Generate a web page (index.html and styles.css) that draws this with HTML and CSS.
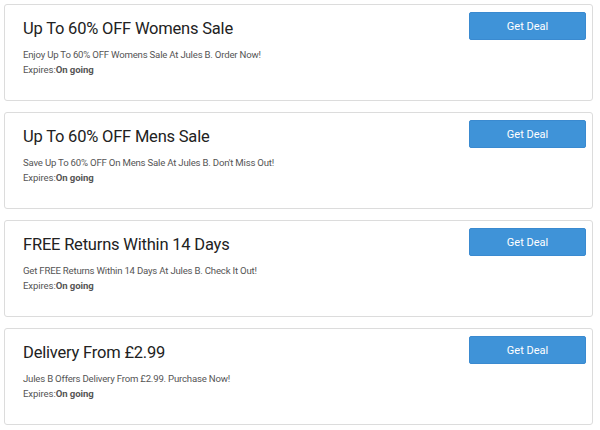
FILE: index.html
```html
<!DOCTYPE html>
<html>
<head>
<meta charset="utf-8">
<link rel="stylesheet" href="styles.css">
</head>
<body>
<div class="list">
  <div class="card">
    <div class="info">
      <h2 class="title">Up To 60% OFF Womens Sale</h2>
      <p class="desc">Enjoy Up To 60% OFF Womens Sale At Jules B. Order Now!</p>
      <p class="expires">Expires:<b>On going</b></p>
    </div>
    <a class="btn">Get Deal</a>
  </div>
  <div class="card">
    <div class="info">
      <h2 class="title">Up To 60% OFF Mens Sale</h2>
      <p class="desc">Save Up To 60% OFF On Mens Sale At Jules B. Don't Miss Out!</p>
      <p class="expires">Expires:<b>On going</b></p>
    </div>
    <a class="btn">Get Deal</a>
  </div>
  <div class="card">
    <div class="info">
      <h2 class="title">FREE Returns Within 14 Days</h2>
      <p class="desc">Get FREE Returns Within 14 Days At Jules B. Check It Out!</p>
      <p class="expires">Expires:<b>On going</b></p>
    </div>
    <a class="btn">Get Deal</a>
  </div>
  <div class="card">
    <div class="info">
      <h2 class="title">Delivery From £2.99</h2>
      <p class="desc">Jules B Offers Delivery From £2.99. Purchase Now!</p>
      <p class="expires">Expires:<b>On going</b></p>
    </div>
    <a class="btn">Get Deal</a>
  </div>
</div>
</body>
</html>
```

FILE: styles.css
```css
html, body {
  margin: 0;
  padding: 0;
  background: #ffffff;
}
body {
  font-family: Roboto, "Liberation Sans", Arial, sans-serif;
}
.list {
  width: 589px;
  margin: 4px 0 0 4px;
  display: flex;
  flex-direction: column;
  gap: 11px;
}
.card {
  box-sizing: border-box;
  height: 97px;
  border: 1px solid #dcdcdc;
  border-radius: 3px;
  padding: 7px 6px 0 18px;
  display: flex;
  justify-content: space-between;
  align-items: flex-start;
}
.info {
  display: flex;
  flex-direction: column;
}
.title {
  margin: 6.5px 0 0 0;
  font-size: 16.5px;
  line-height: 20px;
  letter-spacing: -0.2px;
  font-weight: normal;
  color: #222222;
}
.desc {
  margin: 8px 0 0 0;
  font-size: 9.6px;
  line-height: 15px;
  letter-spacing: -0.2px;
  color: #555555;
}
.expires {
  margin: 0;
  font-size: 9.6px;
  line-height: 15px;
  letter-spacing: -0.1px;
  color: #555555;
}
.expires b {
  color: #555555;
}
.btn {
  box-sizing: border-box;
  width: 117px;
  height: 28px;
  background: #3f93d8;
  border: 1px solid #3a8ad0;
  border-radius: 2px;
  color: #ffffff;
  font-size: 11px;
  display: flex;
  align-items: center;
  justify-content: center;
  text-decoration: none;
}
```
